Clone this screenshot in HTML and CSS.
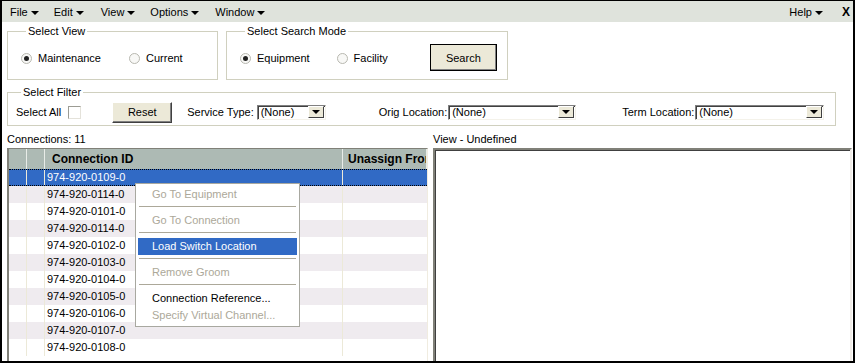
FILE: index.html
```html
<!DOCTYPE html>
<html lang="en">
<head>
    <meta charset="UTF-8">
    <title>Connections</title>
    <link rel="stylesheet" href="styles.css">
</head>
<body>
<div class="window">

    <!-- Barra de menu -->
    <div class="menubar">
        <span class="menu m-file">File</span>
        <span class="menu m-edit">Edit</span>
        <span class="menu m-view">View</span>
        <span class="menu m-options">Options</span>
        <span class="menu m-window">Window</span>
        <span class="menu m-help">Help</span>
        <span class="close">X</span>
    </div>

    <div class="content">
        <div class="top-row">
            <fieldset class="group g-view">
                <legend>Select View</legend>
                <label class="radio r-maint"><span class="dot checked"></span>Maintenance</label>
                <label class="radio r-current"><span class="dot"></span>Current</label>
            </fieldset>
            <fieldset class="group g-mode">
                <legend>Select Search Mode</legend>
                <label class="radio r-equip"><span class="dot checked"></span>Equipment</label>
                <label class="radio r-facility"><span class="dot"></span>Facility</label>
                <button class="btn btn-search">Search</button>
            </fieldset>
        </div>

        <fieldset class="group g-filter">
            <legend>Select Filter</legend>
            <span class="lbl">Select All</span>
            <span class="check"></span>
            <button class="btn btn-reset">Reset</button>
            <span class="lbl l-service">Service Type:</span>
            <span class="combo c-service"><span class="val">(None)</span><span class="arrow"></span></span>
            <span class="lbl l-orig">Orig Location:</span>
            <span class="combo c-orig"><span class="val">(None)</span><span class="arrow"></span></span>
            <span class="lbl l-term">Term Location:</span>
            <span class="combo c-term"><span class="val">(None)</span><span class="arrow"></span></span>
        </fieldset>

        <div class="panels">
            <div class="left-col">
                <div class="caption">Connections: 11</div>
                <div class="grid">
                    <div class="row head">
                        <div class="cell c1"></div>
                        <div class="cell c2"></div>
                        <div class="cell c3">Connection ID</div>
                        <div class="cell c4">Unassign From</div>
                    </div>
                    <div class="row selected"><div class="cell c1"></div><div class="cell c2"></div><div class="cell c3">974-920-0109-0</div><div class="cell c4"></div></div>
                    <div class="row alt"><div class="cell c1"></div><div class="cell c2"></div><div class="cell c3">974-920-0114-0</div><div class="cell c4"></div></div>
                    <div class="row"><div class="cell c1"></div><div class="cell c2"></div><div class="cell c3">974-920-0101-0</div><div class="cell c4"></div></div>
                    <div class="row alt"><div class="cell c1"></div><div class="cell c2"></div><div class="cell c3">974-920-0114-0</div><div class="cell c4"></div></div>
                    <div class="row"><div class="cell c1"></div><div class="cell c2"></div><div class="cell c3">974-920-0102-0</div><div class="cell c4"></div></div>
                    <div class="row alt"><div class="cell c1"></div><div class="cell c2"></div><div class="cell c3">974-920-0103-0</div><div class="cell c4"></div></div>
                    <div class="row"><div class="cell c1"></div><div class="cell c2"></div><div class="cell c3">974-920-0104-0</div><div class="cell c4"></div></div>
                    <div class="row alt"><div class="cell c1"></div><div class="cell c2"></div><div class="cell c3">974-920-0105-0</div><div class="cell c4"></div></div>
                    <div class="row"><div class="cell c1"></div><div class="cell c2"></div><div class="cell c3">974-920-0106-0</div><div class="cell c4"></div></div>
                    <div class="row alt"><div class="cell c1"></div><div class="cell c2"></div><div class="cell c3">974-920-0107-0</div><div class="cell c4"></div></div>
                    <div class="row"><div class="cell c1"></div><div class="cell c2"></div><div class="cell c3">974-920-0108-0</div><div class="cell c4"></div></div>
                </div>
            </div>
            <div class="right-col">
                <div class="caption">View - Undefined</div>
                <div class="viewbox"></div>
            </div>
        </div>
    </div>

    <!-- Menu contextual -->
    <div class="ctx">
        <div class="item disabled">Go To Equipment</div>
        <div class="sep"></div>
        <div class="item disabled">Go To Connection</div>
        <div class="sep"></div>
        <div class="item hot">Load Switch Location</div>
        <div class="sep"></div>
        <div class="item disabled">Remove Groom</div>
        <div class="sep"></div>
        <div class="item">Connection Reference...</div>
        <div class="item disabled">Specify Virtual Channel...</div>
    </div>
</div>
</body>
</html>
```

FILE: styles.css
```css
/* General */
body, html {
    margin: 0;
    padding: 0;
    background: #fff;
}

.window {
    position: relative;
    width: 855px;
    height: 363px;
    box-sizing: border-box;
    border-top: 1px solid #000;
    border-left: 2px solid #000;
    border-right: 2px solid #000;
    border-bottom: 2px solid #000;
    font-family: "Liberation Sans", Arial, sans-serif;
    font-size: 11px;
    color: #000;
    overflow: hidden;
}

/* Menu bar */
.menubar {
    display: flex;
    align-items: center;
    height: 21px;
    background-color: #dfe3dc;
}

.menu {
    display: flex;
    align-items: center;
}

.menu::after {
    content: "";
    margin-left: 3px;
    margin-top: 2px;
    border-left: 4px solid transparent;
    border-right: 4px solid transparent;
    border-top: 4px solid #000;
}

.m-file { margin-left: 8px; }
.m-edit { margin-left: 15px; }
.m-view { margin-left: 17px; }
.m-options { margin-left: 15px; }
.m-window { margin-left: 16px; }
.m-help { margin-left: auto; }

.close {
    margin-left: 19px;
    margin-right: 3px;
    font-size: 12px;
    font-weight: bold;
}

/* Content */
.content {
    padding: 3px 0 0 5px;
}

.top-row {
    display: flex;
    gap: 8px;
}

.group {
    position: relative;
    margin: 0;
    padding: 0;
    border: 1px solid #d0d0bf;
    box-sizing: border-box;
    min-width: 0;
}

.group legend {
    padding: 0 2px;
    margin-left: 5px;
    line-height: 13px;
}

.g-view {
    width: 211px;
    height: 55px;
    display: flex;
    align-items: center;
    padding-left: 13px;
}

.g-mode {
    width: 282px;
    height: 55px;
    display: flex;
    align-items: center;
    padding-left: 13px;
}

.radio {
    display: flex;
    align-items: center;
    margin-top: -1px;
}

.dot {
    position: relative;
    width: 11px;
    height: 11px;
    margin-right: 6px;
    border: 1px solid #b8b8b0;
    border-radius: 50%;
    box-sizing: border-box;
    background: #f8f8f6;
}

.dot.checked::after {
    content: "";
    position: absolute;
    left: 2px;
    top: 2px;
    width: 5px;
    height: 5px;
    border-radius: 50%;
    background: #222;
}

.r-current { margin-left: 28px; }
.r-facility { margin-left: 27px; }

.btn {
    font-family: inherit;
    font-size: 11px;
    color: #000;
    background-color: #ece9d8;
    border: 1px solid;
    border-color: #fff #404040 #404040 #fff;
    box-shadow: inset -1px -1px 0 #808080;
    padding: 0;
    margin: 0;
}

.btn-search {
    width: 67px;
    height: 27px;
    margin-left: 42px;
    outline: 1px solid #000;
    outline-offset: -1px;
    margin-top: -2px;
}

/* Filter */
.g-filter {
    width: 829px;
    height: 40px;
    margin-top: 6px;
    display: flex;
    align-items: center;
    padding-left: 8px;
}

.lbl {
    white-space: nowrap;
}

.check {
    width: 11px;
    height: 11px;
    margin-left: 7px;
    border: 1px solid #9c9c94;
    border-right-color: #e4e2da;
    border-bottom-color: #e4e2da;
    background: #fff;
}

.btn-reset {
    width: 60px;
    height: 21px;
    margin-left: 31px;
}

.l-service { margin-left: 15px; }
.l-orig { margin-left: 53px; }
.l-term { margin-left: 46px; }

.combo {
    display: flex;
    align-items: center;
    height: 15px;
    box-sizing: border-box;
    border: 1px solid;
    border-color: #808080 #f4f2ea #f4f2ea #808080;
    box-shadow: inset 1px 1px 0 #404040;
    background: #fff;
}

.combo .val {
    flex: 1;
    padding-left: 3px;
    line-height: 13px;
}

.combo .arrow {
    position: relative;
    width: 16px;
    height: 12px;
    margin-right: 1px;
    box-sizing: border-box;
    background: #ece9d8;
    border: 1px solid;
    border-color: #fff #404040 #404040 #fff;
}

.combo .arrow::after {
    content: "";
    position: absolute;
    left: 3px;
    top: 3px;
    border-left: 4px solid transparent;
    border-right: 4px solid transparent;
    border-top: 4px solid #000;
}

.c-service { width: 69px; margin-left: 3px; }
.c-orig { width: 128px; margin-left: 1px; }
.c-term { width: 129px; margin-left: 1px; }

/* Panels */
.panels {
    display: flex;
    margin-top: 7px;
}

.caption {
    height: 15px;
    line-height: 13px;
}

.left-col {
    width: 421px;
}

.right-col {
    width: 419px;
    margin-left: 5px;
}

.grid {
    height: 220px;
    box-sizing: border-box;
    border-left: 2px solid #808078;
    border-top: 1px solid #808078;
    border-right: 1px solid #f0ece0;
    overflow: hidden;
}

.row {
    display: flex;
    height: 17px;
    line-height: 17px;
    box-sizing: border-box;
    background: #fff;
}

.row.alt {
    background: #efebef;
}

.row.head {
    height: 20px;
    line-height: 20px;
    background: #adbab4;
    font-weight: bold;
    font-size: 12px;
}

.row.selected {
    background: #316ac5;
    color: #fff;
    border-top: 1px dotted #000;
    border-bottom: 1px dotted #000;
    line-height: 15px;
}

.cell {
    box-sizing: border-box;
    border-right: 1px solid #ece9d8;
    white-space: nowrap;
    overflow: hidden;
}

.head .cell {
    border-right: 1px solid #e8ece8;
}

.c1 { width: 18px; }
.c2 { width: 18px; }
.c3 { width: 298px; padding-left: 2px; }
.c4 { flex: 1; padding-left: 5px; border-right: none; }
.head .c3 { padding-left: 7px; }

.viewbox {
    height: 220px;
    box-sizing: border-box;
    border: 2px solid;
    border-color: #808078 #f0ece8 #f0ece8 #808078;
    box-shadow: inset 1px 1px 0 #404040;
    background: #fff;
}

/* Context menu */
.ctx {
    position: absolute;
    left: 133px;
    top: 182px;
    width: 165px;
    box-sizing: border-box;
    padding: 2px;
    background: #fff;
    border: 1px solid #a8a8a0;
}

.ctx .item {
    height: 17px;
    line-height: 17px;
    padding-left: 14px;
    white-space: nowrap;
}

.ctx .item.disabled {
    color: #aca899;
}

.ctx .item.hot {
    background: #316ac5;
    color: #fff;
}

.ctx .sep {
    height: 9px;
    position: relative;
}

.ctx .sep::after {
    content: "";
    position: absolute;
    left: 1px;
    right: 1px;
    top: 3px;
    height: 1px;
    background: #aca899;
}
```
